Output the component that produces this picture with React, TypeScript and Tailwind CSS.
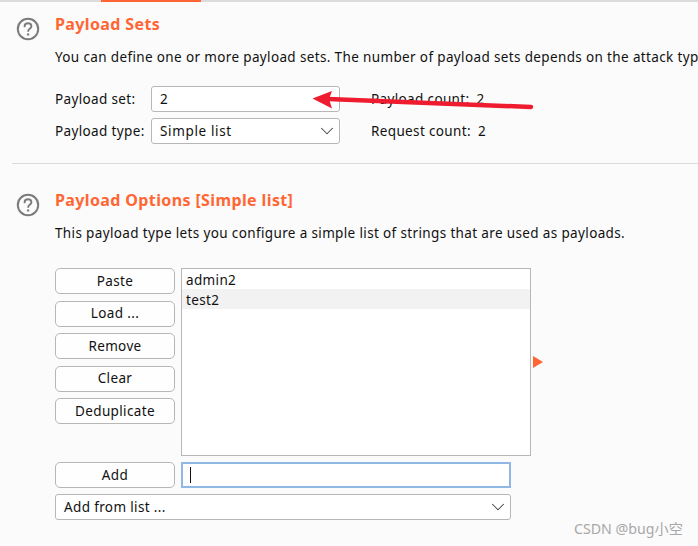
import { ChevronDown } from "lucide-react";

const FONT = "font-['Noto_Sans','Noto_Sans_CJK_SC',sans-serif]";

function HelpIcon() {
  return (
    <svg width="24" height="24" viewBox="0 0 24 24" fill="none" className="shrink-0">
      <circle cx="12" cy="12" r="10.2" stroke="#7b7b7b" strokeWidth="2" />
      <path
        d="M8.6 9.4c0-2 1.5-3.2 3.4-3.2s3.4 1.2 3.4 3c0 2.4-3.2 2.5-3.2 4.8"
        stroke="#7b7b7b"
        strokeWidth="1.9"
        strokeLinecap="round"
      />
      <circle cx="12.1" cy="17.4" r="1.2" fill="#7b7b7b" />
    </svg>
  );
}

function Title({ children }: { children: string }) {
  return <h2 className="text-[16px] leading-[22px] font-bold tracking-[0.38px] text-[#ff6633]">{children}</h2>;
}

function ListButton({ label }: { label: string }) {
  return (
    <button className="w-[120px] h-[26px] shrink-0 rounded-[5px] border border-[#bbb6b6] bg-[#fefefe] text-[13.5px] tracking-[0.36px] text-[#111] flex items-center justify-center">
      {label}
    </button>
  );
}

function Select({ label, className }: { label: string; className: string }) {
  return (
    <div
      className={`h-[26px] rounded-[3px] border border-[#bbb6b6] bg-white flex items-center justify-between pl-[8px] pr-[1.5px] ${className}`}
    >
      <span>{label}</span>
      <ChevronDown size={22} strokeWidth={1.15} className="text-[#444]" />
    </div>
  );
}

function Count({ label, value }: { label: string; value: number }) {
  return (
    <span className="ml-[31px] flex gap-[7px]">
      <span>{label}</span>
      <span>{value}</span>
    </span>
  );
}

export default function App() {
  const buttons = ["Paste", "Load ...", "Remove", "Clear", "Deduplicate"];

  return (
    <div className={`relative w-[698px] h-[546px] overflow-hidden bg-[#fbfbfb] text-[13.5px] tracking-[0.36px] text-[#111] ${FONT}`}>
      {/* Tab strip edge */}
      <div className="h-[2px] bg-[#dcdcdc] pl-[101px]">
        <div className="w-[100px] h-[2px] bg-[#ff6633]" />
      </div>

      {/* Payload Sets */}
      <section className="flex gap-[15px] pl-[16px] pt-[15px] h-[161px] whitespace-nowrap">
        <div>
          <HelpIcon />
        </div>
        <div className="mt-[-4px]">
          <Title>Payload Sets</Title>
          <p className="mt-[11px] leading-[22px]">
            You can define one or more payload sets. The number of payload sets depends on the attack type
          </p>
          <div className="mt-[18px] flex items-center h-[26px]">
            <span className="w-[96px]">Payload set:</span>
            <div className="w-[189px] h-[26px] rounded-[3px] border border-[#bbb6b6] bg-white pl-[8px] leading-[24px]">2</div>
            <Count label="Payload count:" value={2} />
          </div>
          <div className="mt-[6px] flex items-center h-[26px]">
            <span className="w-[96px]">Payload type:</span>
            <Select label="Simple list" className="w-[189px] tracking-[0.65px]" />
            <Count label="Request count:" value={2} />
          </div>
        </div>
      </section>

      <div className="ml-[12px] h-px bg-[#dcdcdc]" />

      {/* Payload Options */}
      <section className="flex gap-[15px] pl-[16px] pt-[29px] whitespace-nowrap">
        <div>
          <HelpIcon />
        </div>
        <div className="mt-[-4px]">
          <Title>Payload Options [Simple list]</Title>
          <p className="mt-[11px] leading-[22px]">
            This payload type lets you configure a simple list of strings that are used as payloads.
          </p>

          <div className="mt-[24px] flex gap-[6px]">
            <div className="flex flex-col gap-[6.5px]">
              {buttons.map((b) => (
                <ListButton key={b} label={b} />
              ))}
            </div>
            <div className="w-[350px] h-[188px] border border-[#bbb6b6] bg-white">
              <div className="h-[20px] pl-[4px] leading-[22px]">admin2</div>
              <div className="h-[20px] pl-[4px] leading-[22px] bg-[#f2f2f2]">test2</div>
            </div>
            <div className="self-center ml-[-4px] w-0 h-0 border-y-[6px] border-y-transparent border-l-[10px] border-l-[#ff6633]" />
          </div>

          <div className="mt-[6px] flex gap-[6px]">
            <ListButton label="Add" />
            <div className="w-[330px] h-[26px] border-2 border-[#8fb8e4] bg-white flex items-center pl-[7px]">
              <div className="w-px h-[16px] bg-[#111]" />
            </div>
          </div>
          <Select label="Add from list ..." className="mt-[6px] w-[456px]" />
        </div>
      </section>

      {/* Screenshot annotation arrow */}
      <svg className="absolute left-0 top-0 pointer-events-none" width="698" height="546" fill="none">
        <path d="M328 99 L531 107" stroke="#ee1c2e" strokeWidth="4.5" strokeLinecap="round" />
        <path d="M312.5 98.5 L332 91 L329 99 L332 108.5 Z" fill="#ee1c2e" />
      </svg>

      {/* Watermark */}
      <span className="absolute left-[574px] top-[520px] text-[14.2px] leading-[18px] tracking-normal text-[#a8a8a8]">
        CSDN @bug小空
      </span>
    </div>
  );
}
